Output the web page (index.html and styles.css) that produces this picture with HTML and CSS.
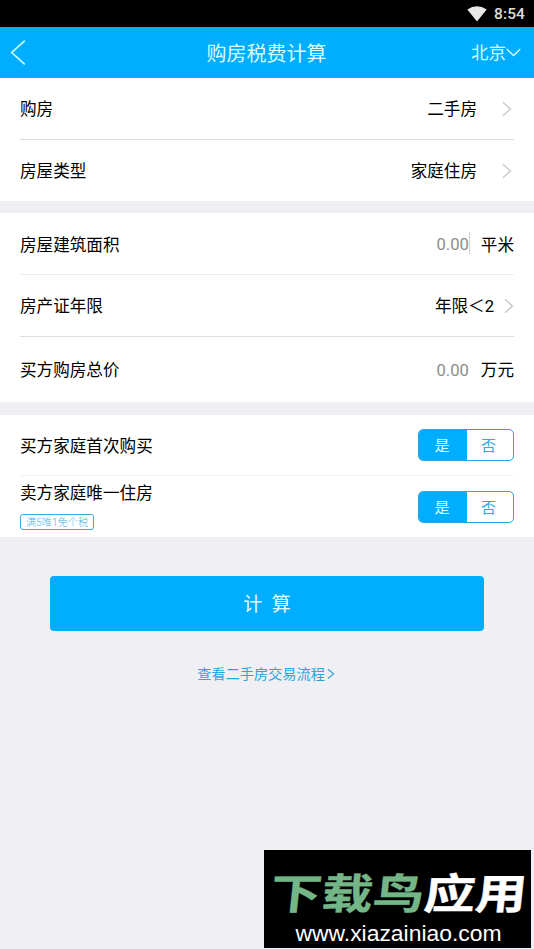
FILE: index.html
```html
<!DOCTYPE html>
<html lang="zh-CN">
<head>
<meta charset="utf-8">
<title>购房税费计算</title>
<link rel="stylesheet" href="styles.css">
</head>
<body>
<div class="status">
  <svg class="wifi" width="20" height="16" viewBox="0 0 20 16"><path d="M0.3 3.6Q10-3.2 19.7 3.6L10 15.6Z" fill="#e8e8e8"/></svg>
  <span class="clock">8:54</span>
</div>
<header class="nav">
  <svg class="back" width="16" height="26" viewBox="0 0 16 26"><path d="M14.8 .6L1.7 12.6L14.8 24.3" fill="none" stroke="#c9fcff" stroke-width="1.6"/></svg>
  <h1 class="title">购房税费计算</h1>
  <div class="city"><span>北京</span><svg width="15" height="9" viewBox="0 0 15 9"><path d="M.7 1L7.5 7.5L14.3 1" fill="none" stroke="#d5fdff" stroke-width="1.4"/></svg></div>
</header>
<main>
  <section class="group">
    <div class="row line">
      <span class="label">购房</span><span class="value">二手房</span>
      <svg class="chev wide" width="10" height="16" viewBox="0 0 10 16"><path d="M1 1.2L8.4 8L1 14.8" fill="none" stroke="#c8c8c8" stroke-width="1.4"/></svg>
    </div>
    <div class="row">
      <span class="label">房屋类型</span><span class="value">家庭住房</span>
      <svg class="chev wide" width="10" height="16" viewBox="0 0 10 16"><path d="M1 1.2L8.4 8L1 14.8" fill="none" stroke="#c8c8c8" stroke-width="1.4"/></svg>
    </div>
  </section>
  <section class="group">
    <div class="row line faint">
      <span class="label">房屋建筑面积</span><span class="number">0.00</span><i class="caret"></i><span class="unit">平米</span>
    </div>
    <div class="row line mid">
      <span class="label">房产证年限</span><span class="value">年限＜2</span>
      <svg class="chev" width="10" height="16" viewBox="0 0 10 16"><path d="M1 1.2L8.4 8L1 14.8" fill="none" stroke="#c8c8c8" stroke-width="1.4"/></svg>
    </div>
    <div class="row price">
      <span class="label">买方购房总价</span><span class="number">0.00</span><i class="caret off"></i><span class="unit">万元</span>
    </div>
  </section>
  <section class="group">
    <div class="row line fainter">
      <span class="label">买方家庭首次购买</span>
      <div class="toggle"><span class="on">是</span><span class="no">否</span></div>
    </div>
    <div class="row last">
      <div class="stack"><span class="label">卖方家庭唯一住房</span><span class="tag">满5唯1免个税</span></div>
      <div class="toggle"><span class="on">是</span><span class="no">否</span></div>
    </div>
  </section>
  <button class="calc">计&nbsp; 算</button>
  <div class="link"><span>查看二手房交易流程</span><svg width="8" height="12" viewBox="0 0 8 12"><path d="M1 1.2L6.6 5.8L1 10.5" fill="none" stroke="#35a6d9" stroke-width="1.2"/></svg></div>
</main>
<aside class="mark">
  <div class="brand"><span class="green">下载鸟</span>应用</div>
  <div class="url">www.xiazainiao.com</div>
</aside>
</body>
</html>
```
FILE: styles.css
```css
* { box-sizing: border-box; }
body {
  margin: 0;
  position: relative;
  height: 949px;
  overflow: hidden;
  background: #efeff4;
  color: #000;
  font: 16.6px/24px Roboto, "Noto Sans CJK SC", sans-serif;
}
.status {
  height: 27px;
  background: #000;
  display: flex;
  justify-content: flex-end;
  align-items: center;
  gap: 7px;
  padding-right: 9px;
}
.clock { color: #dedede; font-size: 15.5px; font-weight: 500; letter-spacing: .1px; }
.nav {
  height: 51px;
  background: #00adff;
  color: #d8fdff;
  display: grid;
  grid-template-columns: 1fr auto 1fr;
  align-items: center;
  padding: 0 13px 0 10px;
}
.title { margin: 0; padding-top: 2px; font-size: 20px; font-weight: 400; position: relative; left: 1px; }
.city { display: flex; justify-content: flex-end; align-items: center; font-size: 17.5px; }
.group { background: #fff; margin-bottom: 13px; padding: 0 20px; }
.group:first-child { margin-bottom: 12px; }
.row { height: 61.5px; display: flex; align-items: center; white-space: nowrap; }
.row > span { padding-top: 4px; }
.line { border-bottom: 1px solid #dedede; }
.faint { border-color: #eeeeee; }
.faint > .label, .faint > .unit { padding-top: 5px; }
.mid { height: 62.5px; }
.fainter { height: 61px; border-color: #f4f4f4; }
.last { height: 61px; }
.label { margin-right: auto; }
.value { margin-right: 1px; }
.chev { margin: 2px 0 0 9px; }
.chev.wide { margin: 1px 2px 0 24px; }
.number { color: #8c8c8c; }
.caret { width: 1px; height: 22px; background: #cfcfcf; }
.caret.off { background: transparent; }
.unit { margin-left: 11px; }
.price { height: 65px; }
.price > span { padding-top: 2px; }
.stack { display: flex; flex-direction: column; align-items: flex-start; margin-right: auto; }
.tag {
  width: 74px;
  height: 16px;
  margin-top: 8px;
  margin-bottom: 2px;
  border: 1px solid #38acd8;
  border-radius: 3px;
  color: #4db8df;
  font-size: 10.2px;
  line-height: 15px;
  text-align: center;
  font-weight: 300;
}
.toggle {
  width: 96px;
  height: 32px;
  display: flex;
  border: 1px solid #2aa5dc;
  border-radius: 5px;
  overflow: hidden;
  color: #2fabe0;
  font-size: 15px;
  line-height: 33px;
  text-align: center;
}
.on { width: 48px; padding-right: 2px; background: #00adff; color: #e3feff; }
.no { flex: 1; padding-right: 3px; }
.calc {
  display: block;
  width: 434px;
  height: 55px;
  margin: 39px auto 0;
  padding: 0;
  border: 0;
  border-radius: 4px;
  background: #00adff;
  color: #e3feff;
  font: 19px/58px Roboto, "Noto Sans CJK SC", sans-serif;
}
.link {
  margin: 31px 2px 0 0;
  display: flex;
  justify-content: center;
  align-items: center;
  gap: 2px;
  color: #28a5de;
  font-size: 14.2px;
}
.mark {
  position: absolute;
  left: 264px;
  top: 850px;
  width: 267px;
  height: 98px;
  background: #000;
  color: #fff;
  display: flex;
  flex-direction: column;
  align-items: center;
}
.brand {
  margin: 15px 0 0 4px;
  height: 52px;
  font: 700 42px/52px "Noto Sans CJK SC", sans-serif;
  -webkit-text-stroke: .4px currentColor;
  white-space: nowrap;
  transform: scaleX(1.22) skewX(-5deg);
}
.green { color: #74b687; }
.url { margin-top: 1px; font: 22.9px/30px "Liberation Sans", sans-serif; padding-left: 2px; }
```
